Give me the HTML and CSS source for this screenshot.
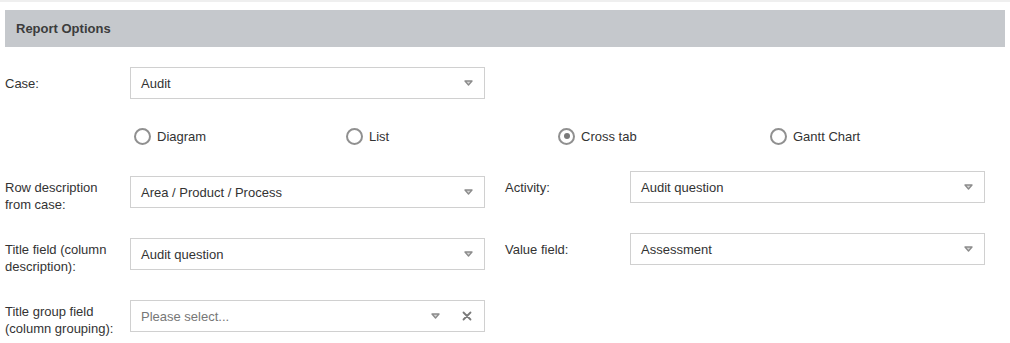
FILE: index.html
```html
<!DOCTYPE html>
<html lang="en">
<head>
    <meta charset="UTF-8">
    <title>Report Options</title>
    <link rel="stylesheet" href="styles.css">
</head>
<body>
    <div class="top-line"></div>
    <div class="panel">
        <div class="panel-header">Report Options</div>

        <div class="form">
            <div class="row-case">
                <label class="label">Case:</label>
                <div class="select">
                    <span class="value">Audit</span>
                    <svg class="caret" width="9" height="6" viewBox="0 0 9 6"><polygon points="1,1 8,1 4.5,5" fill="#d6d6d6" stroke="#8c8c8c" stroke-width="1.4" stroke-linejoin="round"/></svg>
                </div>
            </div>

            <div class="radios">
                <label class="radio"><span class="dot"></span>Diagram</label>
                <label class="radio"><span class="dot"></span>List</label>
                <label class="radio"><span class="dot checked"></span>Cross tab</label>
                <label class="radio"><span class="dot"></span>Gantt Chart</label>
            </div>

            <div class="pair">
                <div class="field left">
                    <label class="label">Row description from case:</label>
                    <div class="select">
                        <span class="value">Area / Product / Process</span>
                        <svg class="caret" width="9" height="6" viewBox="0 0 9 6"><polygon points="1,1 8,1 4.5,5" fill="#d6d6d6" stroke="#8c8c8c" stroke-width="1.4" stroke-linejoin="round"/></svg>
                    </div>
                </div>
                <div class="field right">
                    <label class="label">Activity:</label>
                    <div class="select">
                        <span class="value">Audit question</span>
                        <svg class="caret" width="9" height="6" viewBox="0 0 9 6"><polygon points="1,1 8,1 4.5,5" fill="#d6d6d6" stroke="#8c8c8c" stroke-width="1.4" stroke-linejoin="round"/></svg>
                    </div>
                </div>
            </div>

            <div class="pair">
                <div class="field left">
                    <label class="label">Title field (column description):</label>
                    <div class="select">
                        <span class="value">Audit question</span>
                        <svg class="caret" width="9" height="6" viewBox="0 0 9 6"><polygon points="1,1 8,1 4.5,5" fill="#d6d6d6" stroke="#8c8c8c" stroke-width="1.4" stroke-linejoin="round"/></svg>
                    </div>
                </div>
                <div class="field right">
                    <label class="label">Value field:</label>
                    <div class="select">
                        <span class="value">Assessment</span>
                        <svg class="caret" width="9" height="6" viewBox="0 0 9 6"><polygon points="1,1 8,1 4.5,5" fill="#d6d6d6" stroke="#8c8c8c" stroke-width="1.4" stroke-linejoin="round"/></svg>
                    </div>
                </div>
            </div>

            <div class="pair">
                <div class="field left">
                    <label class="label">Title group field (column grouping):</label>
                    <div class="select">
                        <span class="value placeholder">Please select...</span>
                        <svg class="caret" width="9" height="6" viewBox="0 0 9 6"><polygon points="1,1 8,1 4.5,5" fill="#d6d6d6" stroke="#8c8c8c" stroke-width="1.4" stroke-linejoin="round"/></svg>
                        <svg class="clear" width="10" height="10" viewBox="0 0 10 10"><path d="M1.5 1.5 L8.5 8.5 M8.5 1.5 L1.5 8.5" stroke="#7a7a7a" stroke-width="1.8" stroke-linecap="round"/></svg>
                    </div>
                </div>
            </div>
        </div>
    </div>
</body>
</html>
```

FILE: styles.css
```css
body {
    margin: 0;
    font-family: "Liberation Sans", Arial, sans-serif;
    font-size: 13px;
    color: #333;
    background: #fff;
}
.top-line {
    height: 2px;
    background: #efefef;
}
.panel {
    padding: 0 5px;
}
.panel-header {
    margin-top: 8px;
    height: 37px;
    line-height: 37px;
    padding-left: 11px;
    background: #c5c8cc;
    color: #3c3c3c;
    font-weight: bold;
}
.form {
    padding-top: 20px;
}
.label {
    display: block;
    box-sizing: border-box;
    width: 125px;
    padding-right: 10px;
    flex-shrink: 0;
    line-height: 17px;
    color: #333;
}
.select {
    box-sizing: border-box;
    width: 355px;
    height: 32px;
    border: 1px solid #d0d0d0;
    display: flex;
    align-items: center;
    padding: 0 11px 0 10px;
    background: #fff;
}
.select .value {
    flex: 1;
    color: #333;
}
.select .placeholder {
    color: #777;
}
.select .clear {
    margin-left: 22px;
    margin-right: 1px;
}
.row-case {
    display: flex;
    align-items: center;
}
.radios {
    display: grid;
    grid-template-columns: repeat(4, 212px);
    margin: 28px 0 0 129px;
    height: 18px;
}
.radio {
    display: flex;
    align-items: center;
    gap: 6px;
    color: #333;
}
.dot {
    box-sizing: border-box;
    width: 17px;
    height: 17px;
    border: 2px solid #909090;
    border-radius: 50%;
    display: flex;
    align-items: center;
    justify-content: center;
}
.dot.checked::after {
    content: "";
    width: 6px;
    height: 6px;
    border-radius: 50%;
    background: #7a7a7a;
}
.pair {
    display: flex;
    align-items: flex-start;
    height: 42px;
    margin-top: 26px;
}
.pair + .pair {
    margin-top: 20px;
}
.field {
    display: flex;
}
.field.left {
    align-items: flex-start;
    margin-top: 5px;
}
.field.left .label {
    padding-top: 3px;
}
.field.right {
    align-items: center;
    margin-left: 20px;
}
```
